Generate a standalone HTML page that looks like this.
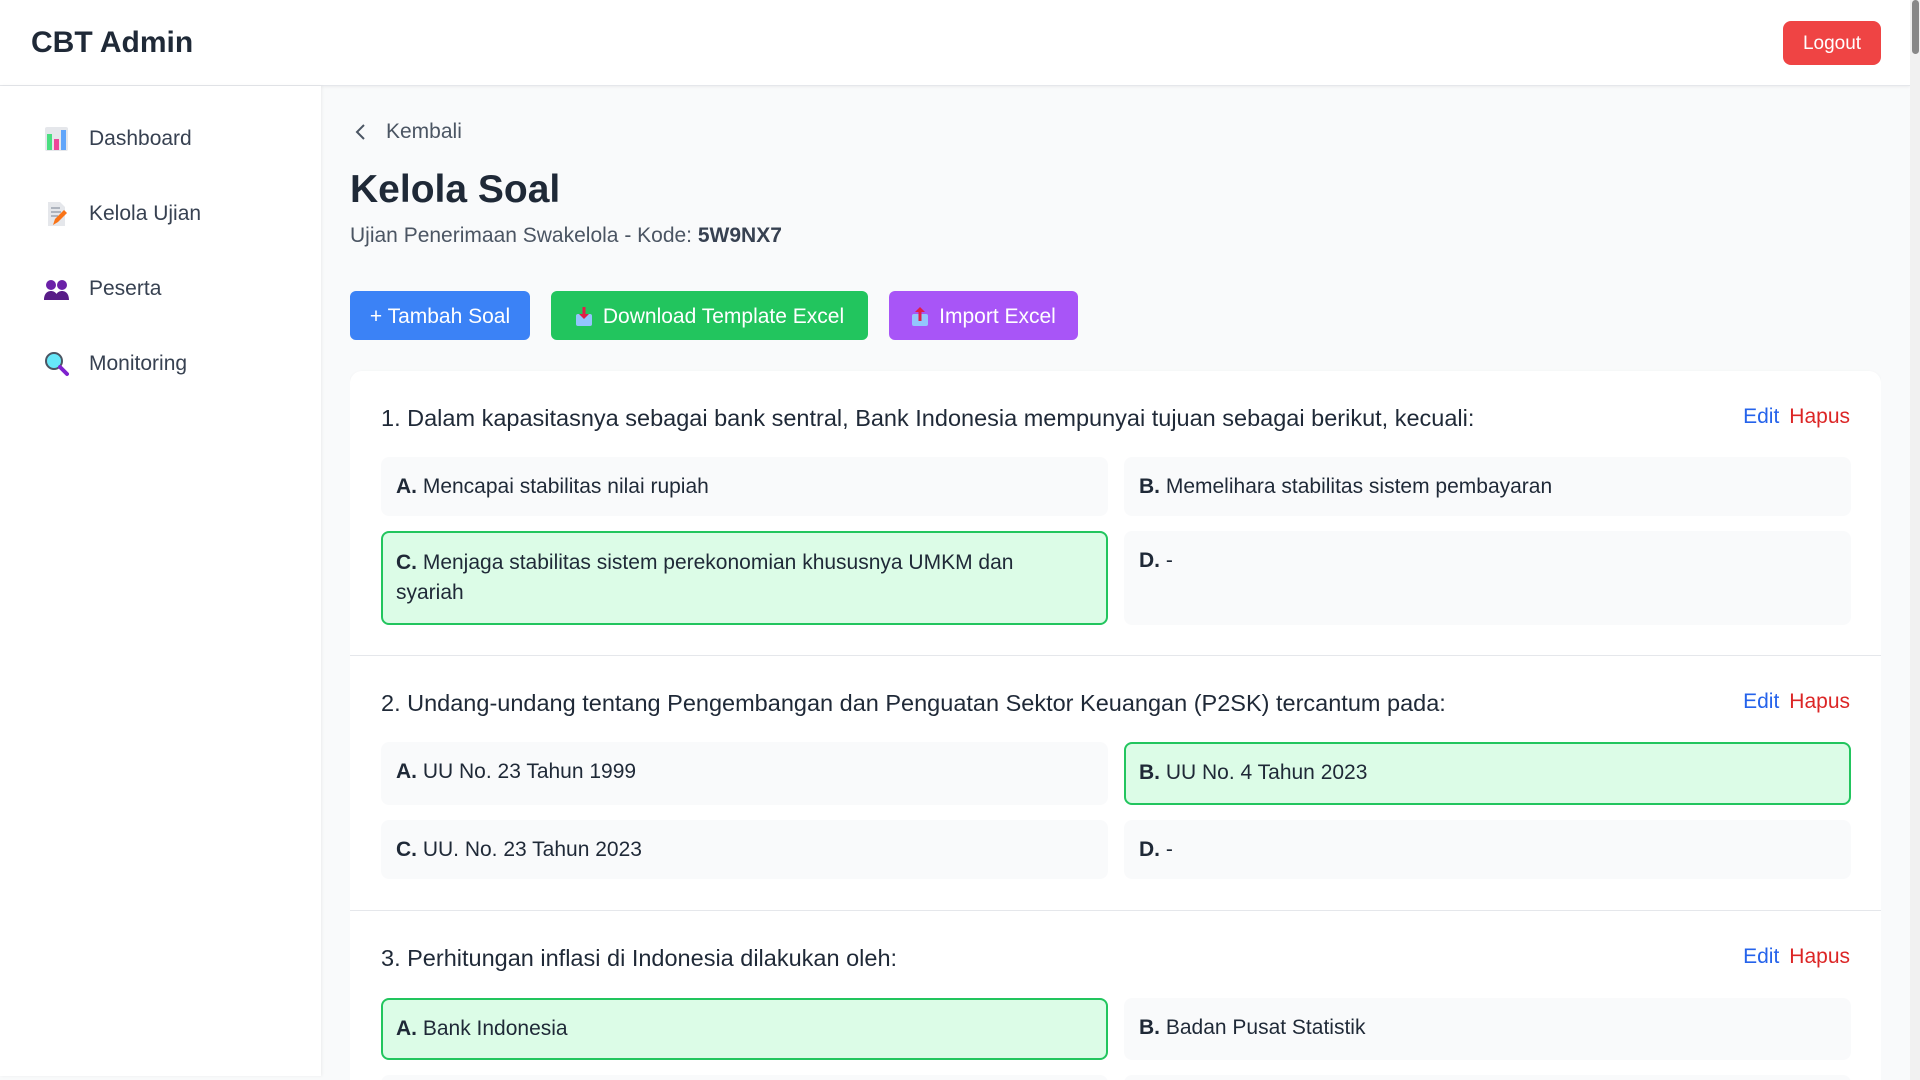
<!DOCTYPE html>
<html><head><meta charset="utf-8"><style>
*{box-sizing:border-box;margin:0;padding:0}
html,body{width:1920px;height:1080px;overflow:hidden}
body{font-family:"Liberation Sans",sans-serif;color:#1f2937;background:#f9fafb;position:relative}
.hdr{position:absolute;left:0;top:0;width:1910px;height:86px;background:#fff;border-bottom:1px solid #e5e7eb;box-shadow:0 1px 3px rgba(0,0,0,.06)}
.hdr h1{position:absolute;left:31px;top:26px;font-size:30px;font-weight:700;color:#1f2937}
.logout{position:absolute;left:1783px;top:21px;width:98px;height:44px;background:#ef4444;color:#fff;border-radius:8px;font-size:19px;display:flex;align-items:center;justify-content:center;padding-top:2px}
.sb{position:absolute;left:0;top:86px;width:321px;height:990px;background:#fff;box-shadow:1px 0 3px rgba(0,0,0,.06)}
.item{position:absolute;left:44px;display:flex;align-items:center;font-size:21px;color:#374151}
.item svg{margin-right:20px}
.scroll{position:absolute;right:0;top:0;width:10px;height:1080px;background:#f1f1f1}
.scroll div{position:absolute;left:2px;top:0;width:7px;height:54px;background:#888;border-radius:4px}
.main{position:absolute;left:350px;top:86px;width:1531px;height:994px;overflow:hidden}
.back{position:absolute;top:34px;left:4px;font-size:21px;color:#4b5563;display:flex;align-items:center}
.title{position:absolute;top:82px;font-size:39px;font-weight:700;color:#1f2937}
.sub{position:absolute;top:138px;font-size:21px;color:#4b5563}
.btn{position:absolute;top:205px;height:49px;border-radius:6px;color:#fff;font-size:21px;display:flex;align-items:center;justify-content:center;padding-top:2px}
.card{position:absolute;top:285px;left:0;width:1531px;height:720px;background:#fff;border-radius:12px;box-shadow:0 1px 3px rgba(0,0,0,.06)}
.q{position:absolute;left:0;width:1531px;padding:0 31px;border-bottom:1px solid #e5e7eb}
.qh{position:absolute;left:31px;font-size:23.5px;color:#1f2937}
.act{position:absolute;right:31px;font-size:21px}
.act .e{color:#2563eb;margin-right:10px}.act .h{color:#dc2626}
.opt{position:absolute;width:727px;background:#f9fafb;border:2px solid transparent;border-radius:8px;padding:13px 13px;font-size:21px;line-height:30px;color:#1f2937}
.opt.ok{background:#dcfce7;border-color:#22c55e}
.opt b{font-weight:700}
</style></head><body>
<div class="hdr"><h1>CBT Admin</h1><div class="logout">Logout</div></div>
<div class="sb">
 <div class="item" style="top:40px"><svg width="25" height="26" viewBox="0 0 25 26"><rect x="1" y="1" width="23" height="24" rx="2" fill="#e5e7eb"/><rect x="3" y="8" width="5" height="16" fill="#4ade80"/><rect x="10" y="13" width="5" height="11" fill="#ec4899"/><rect x="17" y="4" width="5" height="20" fill="#60a5fa"/></svg>Dashboard</div>
 <div class="item" style="top:115px"><svg width="25" height="26" viewBox="0 0 25 26"><path d="M4 1h12l5 5v19H4z" fill="#e5e7eb"/><path d="M7 7h9M7 11h10M7 15h7" stroke="#9ca3af" stroke-width="1.5"/><path d="M9 24l2-6 9-9 3 3-9 9z" fill="#f97316"/></svg>Kelola Ujian</div>
 <div class="item" style="top:190px"><svg width="25" height="26" viewBox="0 0 25 26"><circle cx="7" cy="9" r="5" fill="#6b21a8"/><circle cx="18" cy="9" r="5" fill="#6b21a8"/><path d="M0 24c0-7 4-9 7-9s7 2 7 9zM11 24c0-7 4-9 7-9s7 2 7 9z" fill="#581c87"/></svg>Peserta</div>
 <div class="item" style="top:265px"><svg width="25" height="26" viewBox="0 0 25 26"><circle cx="10" cy="10" r="8" fill="#67e8f9" stroke="#4b5563" stroke-width="2"/><path d="M16 16l7 7" stroke="#7e22ce" stroke-width="4" stroke-linecap="round"/></svg>Monitoring</div>
</div>
<div class="main">
 <div class="back"><svg width="14" height="20" viewBox="0 0 14 20" style="margin-right:18px"><path d="M10 3L3 10l7 7" fill="none" stroke="#4b5563" stroke-width="2"/></svg>Kembali</div>
 <div class="title">Kelola Soal</div>
 <div class="sub">Ujian Penerimaan Swakelola - Kode: <b style="color:#374151">5W9NX7</b></div>
 <div class="btn" style="left:0;width:180px;background:#3b82f6">+ Tambah Soal</div>
 <div class="btn" style="left:201px;width:317px;background:#22c55e"><svg width="18" height="20" viewBox="0 0 18 20" style="margin-right:10px"><rect x="1" y="7" width="16" height="12" rx="2" fill="#93c5fd"/><path d="M9 0v10" stroke="#e11d48" stroke-width="3"/><path d="M4 7l5 5 5-5z" fill="#e11d48"/></svg>Download Template Excel</div>
 <div class="btn" style="left:539px;width:189px;background:#a855f7"><svg width="18" height="20" viewBox="0 0 18 20" style="margin-right:10px"><rect x="1" y="7" width="16" height="12" rx="2" fill="#93c5fd"/><path d="M9 14V3" stroke="#e11d48" stroke-width="3"/><path d="M4 5l5-5 5 5z" fill="#e11d48"/></svg>Import Excel</div>
 <div class="card">
  <div class="q" style="top:0;height:285px">
   <div class="qh" style="top:34px">1. Dalam kapasitasnya sebagai bank sentral, Bank Indonesia mempunyai tujuan sebagai berikut, kecuali:</div>
   <div class="act" style="top:34px"><span class="e">Edit</span><span class="h">Hapus</span></div>
   <div class="opt" style="left:31px;top:86px;height:59px"><b>A.</b> Mencapai stabilitas nilai rupiah</div>
   <div class="opt" style="left:774px;top:86px;height:59px"><b>B.</b> Memelihara stabilitas sistem pembayaran</div>
   <div class="opt ok" style="left:31px;top:160px;height:94px;padding-top:15px">
<b>C.</b> Menjaga stabilitas sistem perekonomian khususnya UMKM dan<br>syariah</div>
   <div class="opt" style="left:774px;top:160px;height:94px"><b>D.</b> -</div>
  </div>
  <div class="q" style="top:285px;height:255px">
   <div class="qh" style="top:34px">2. Undang-undang tentang Pengembangan dan Penguatan Sektor Keuangan (P2SK) tercantum pada:</div>
   <div class="act" style="top:34px"><span class="e">Edit</span><span class="h">Hapus</span></div>
   <div class="opt" style="left:31px;top:86px;height:63px"><b>A.</b> UU No. 23 Tahun 1999</div>
   <div class="opt ok" style="left:774px;top:86px;height:63px;padding-top:14px"><b>B.</b> UU No. 4 Tahun 2023</div>
   <div class="opt" style="left:31px;top:164px;height:59px"><b>C.</b> UU. No. 23 Tahun 2023</div>
   <div class="opt" style="left:774px;top:164px;height:59px"><b>D.</b> -</div>
  </div>
  <div class="q" style="top:540px;height:180px;border:none">
   <div class="qh" style="top:34px">3. Perhitungan inflasi di Indonesia dilakukan oleh:</div>
   <div class="act" style="top:34px"><span class="e">Edit</span><span class="h">Hapus</span></div>
   <div class="opt ok" style="left:31px;top:87px;height:62px;padding-top:14px"><b>A.</b> Bank Indonesia</div>
   <div class="opt" style="left:774px;top:87px;height:62px"><b>B.</b> Badan Pusat Statistik</div>
   <div class="opt" style="left:31px;top:164px;height:59px"></div>
   <div class="opt" style="left:774px;top:164px;height:59px"></div>
  </div>
 </div>
</div>
<div class="scroll"><div></div></div>
</body></html>
